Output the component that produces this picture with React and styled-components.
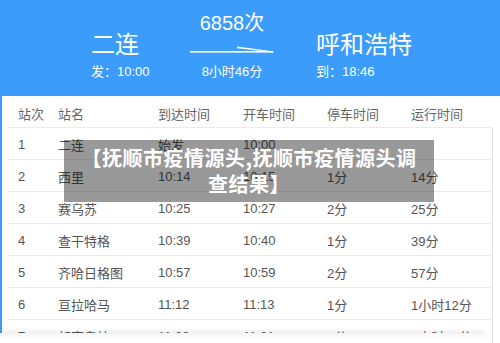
import React from "react";
import styled, { createGlobalStyle } from "styled-components";

const GlobalStyle = createGlobalStyle`
  html, body {
    margin: 0;
    padding: 0;
    overflow: hidden;
    background: #ffffff;
    font-family: "Liberation Sans", "Noto Sans CJK SC", sans-serif;
  }
`;

const Page = styled.div`
  position: relative;
  width: 500px;
  height: 343px;
  overflow: hidden;
  background: #3c9cfc;
`;

const Header = styled.header`
  display: flex;
  height: 96px;
  padding-left: 91px;
  box-sizing: border-box;
  color: #ffffff;
`;

const Station = styled.div`
  width: ${(p) => p.$w}px;
  padding-top: 31px;
`;

const StationName = styled.div`
  font-size: 24px;
  line-height: 28px;
`;

const Sub = styled.div`
  font-size: 13px;
  line-height: 16px;
  margin-top: ${(p) => p.$mt ?? 5}px;
  white-space: nowrap;
`;

const Middle = styled.div`
  width: 84px;
  margin-right: 42px;
  padding-top: 11px;
  display: flex;
  flex-direction: column;
  align-items: center;
`;

const TrainNo = styled.div`
  font-size: 20px;
  line-height: 24px;
`;

const ArrowSvg = styled.svg`
  display: block;
  margin-top: 11px;
`;

const Card = styled.section`
  margin-left: 2px;
  height: 247px;
  background: #ffffff;
  padding-left: 6px;
`;

const Table = styled.div`
  width: 485px;
  color: #555555;
`;

const Row = styled.div`
  display: grid;
  grid-template-columns: 50px 100px 85px 84px 84px 1fr;
  align-items: center;
  height: 32px;
  box-sizing: border-box;
  padding-top: ${(p) => (p.$head ? 3 : 2)}px;
  border-bottom: 1px solid #ebebeb;
  font-size: 13px;
  color: ${(p) => (p.$head ? "#666666" : "#555555")};
  white-space: nowrap;
`;

const Cell = styled.div`
  padding-left: ${(p) => (p.$first ? 10 : 0)}px;
`;

const Body = styled.div`
  border-right: 1px solid #e2e2e2;
`;

const Banner = styled.div`
  position: absolute;
  left: 64px;
  top: 140px;
  width: 370px;
  height: 62px;
  box-sizing: border-box;
  padding: 5px 0;
  background: rgba(0, 0, 0, 0.4);
  color: #ffffff;
  font-family: "Noto Sans CJK SC", sans-serif;
  font-weight: 700;
  font-size: 20px;
  letter-spacing: 0.5px;
  line-height: 26px;
  text-align: center;
  white-space: nowrap;
`;

const BottomBar = styled.div`
  position: absolute;
  left: 0;
  bottom: 0;
  width: 485px;
  height: 10px;
  background: linear-gradient(#f4f4f4, #ffffff 60%);
  box-shadow: 0 -2px 4px rgba(0, 0, 0, 0.08);
`;

const columns = ["站次", "站名", "到达时间", "开车时间", "停车时间", "运行时间"];

const rows = [
  ["1", "二连", "始发", "10:00", "", ""],
  ["2", "西里", "10:14", "10:15", "1分", "14分"],
  ["3", "赛乌苏", "10:25", "10:27", "2分", "25分"],
  ["4", "查干特格", "10:39", "10:40", "1分", "39分"],
  ["5", "齐哈日格图", "10:57", "10:59", "2分", "57分"],
  ["6", "亘拉哈马", "11:12", "11:13", "1分", "1小时12分"],
  ["7", "朝克乌拉", "11:29", "11:31", "2分", "1小时29分"],
  ["8", "朱日和", "11:45", "11:47", "2分", "1小时45分"],
];

function Arrow() {
  return (
    <ArrowSvg width="84" height="8" viewBox="0 0 84 8">
      <rect x="0" y="5" width="83" height="1.6" fill="#ffffff" />
      <polygon points="47,0.6 84,5.6 83,6.4 47,2.2" fill="#ffffff" />
    </ArrowSvg>
  );
}

export default function App() {
  return (
    <>
      <GlobalStyle />
      <Page>
        <Header>
          <Station $w={99}>
            <StationName>二连</StationName>
            <Sub>发：10:00</Sub>
          </Station>
          <Middle>
            <TrainNo>6858次</TrainNo>
            <Arrow />
            <Sub $mt={10}>8小时46分</Sub>
          </Middle>
          <Station $w={150}>
            <StationName>呼和浩特</StationName>
            <Sub>到：18:46</Sub>
          </Station>
        </Header>
        <Card>
          <Table>
            <Row $head>
              {columns.map((c, i) => (
                <Cell key={c} $first={i === 0}>
                  {c}
                </Cell>
              ))}
            </Row>
            <Body>
              {rows.map((r) => (
                <Row key={r[0]}>
                  {r.map((v, i) => (
                    <Cell key={i} $first={i === 0}>
                      {v}
                    </Cell>
                  ))}
                </Row>
              ))}
            </Body>
          </Table>
        </Card>
        <Banner>
          【抚顺市疫情源头,抚顺市疫情源头调
          <br />
          查结果】
        </Banner>
        <BottomBar />
      </Page>
    </>
  );
}
